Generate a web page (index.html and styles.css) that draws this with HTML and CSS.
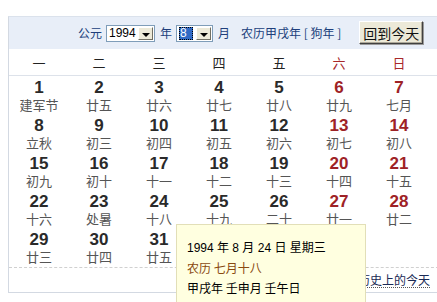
FILE: index.html
```html
<!DOCTYPE html>
<html lang="zh-CN">
<head>
<meta charset="utf-8">
<link rel="stylesheet" href="styles.css">
</head>
<body>
<div class="cal">
  <div class="topbar">
    <span class="lbl">公元</span>
    <div class="sel sel-year"><span class="val">1994</span><span class="arrow"></span></div>
    <span class="lbl">年</span>
    <div class="sel sel-month"><span class="val"><span class="hl">8</span></span><span class="arrow"></span></div>
    <span class="lbl">月</span>
    <span class="lunar-year">农历甲戌年 [ 狗年 ]</span>
    <button class="today-btn">回到今天</button>
  </div>
  <div class="weekdays">
    <div>一</div><div>二</div><div>三</div><div>四</div><div>五</div><div class="we">六</div><div class="we">日</div>
  </div>
  <div class="days">
    <div class="d"><b>1</b><i>建军节</i></div>
    <div class="d"><b>2</b><i>廿五</i></div>
    <div class="d"><b>3</b><i>廿六</i></div>
    <div class="d"><b>4</b><i>廿七</i></div>
    <div class="d"><b>5</b><i>廿八</i></div>
    <div class="d we"><b>6</b><i>廿九</i></div>
    <div class="d we"><b>7</b><i>七月</i></div>
    <div class="d"><b>8</b><i>立秋</i></div>
    <div class="d"><b>9</b><i>初三</i></div>
    <div class="d"><b>10</b><i>初四</i></div>
    <div class="d"><b>11</b><i>初五</i></div>
    <div class="d"><b>12</b><i>初六</i></div>
    <div class="d we"><b>13</b><i>初七</i></div>
    <div class="d we"><b>14</b><i>初八</i></div>
    <div class="d"><b>15</b><i>初九</i></div>
    <div class="d"><b>16</b><i>初十</i></div>
    <div class="d"><b>17</b><i>十一</i></div>
    <div class="d"><b>18</b><i>十二</i></div>
    <div class="d"><b>19</b><i>十三</i></div>
    <div class="d we"><b>20</b><i>十四</i></div>
    <div class="d we"><b>21</b><i>十五</i></div>
    <div class="d"><b>22</b><i>十六</i></div>
    <div class="d"><b>23</b><i>处暑</i></div>
    <div class="d"><b>24</b><i>十八</i></div>
    <div class="d"><b>25</b><i>十九</i></div>
    <div class="d"><b>26</b><i>二十</i></div>
    <div class="d we"><b>27</b><i>廿一</i></div>
    <div class="d we"><b>28</b><i>廿二</i></div>
    <div class="d"><b>29</b><i>廿三</i></div>
    <div class="d"><b>30</b><i>廿四</i></div>
    <div class="d"><b>31</b><i>廿五</i></div>
  </div>
  <div class="footer"><span class="hist">历史上的今天</span></div>
</div>
<div class="tip">
  <div class="t1">1994 年 8 月 24 日 星期三</div>
  <div class="t2">农历 七月十八</div>
  <div class="t3">甲戌年 壬申月 壬午日</div>
</div>
</body>
</html>
```
FILE: styles.css
```css
html, body { margin: 0; padding: 0; background: #fff; }
body {
  font-family: "Noto Sans CJK SC", "Liberation Sans", sans-serif;
  font-size: 12px;
  color: #222;
  overflow: hidden;
  width: 437px;
  height: 302px;
  position: relative;
}
.cal {
  margin: 16px 0 0 8px;
  width: 440px;
  border: 1px solid #d3d9e2;
  border-top-color: #dbe2ec;
}
.topbar {
  height: 32px;
  background: #e8eef8;
  display: flex;
  align-items: center;
  padding-left: 69px;
}
.lbl, .lunar-year {
  color: #203f7c;
  font-size: 12px;
  line-height: 16px;
}
.lbl { margin-right: 4px; }
.sel {
  box-sizing: border-box;
  height: 17px;
  border: 1px solid #7f9db9;
  background: #fff;
  display: flex;
  align-items: stretch;
  margin-right: 5px;
}
.sel-year { width: 49px; }
.sel-month { width: 37px; }
.val {
  flex: 1;
  font-family: "Liberation Sans", sans-serif;
  font-size: 12px;
  line-height: 15px;
  padding-left: 2px;
  color: #000;
}
.hl {
  display: inline-block;
  background: #316ac5;
  color: #fff;
  width: 14px;
  height: 13px;
  line-height: 13px;
  margin-top: 1px;
  outline: 1px dotted #000;
  outline-offset: -1px;
  text-indent: 1px;
}
.arrow {
  width: 13px;
  margin: 1px;
  background: #ece9d8;
  border: 1px solid;
  border-color: #fff #716f64 #716f64 #fff;
  position: relative;
}
.arrow::after {
  content: "";
  position: absolute;
  left: 3px;
  top: 5px;
  border-left: 4px solid transparent;
  border-right: 4px solid transparent;
  border-top: 4px solid #000;
}
.lunar-year { margin-left: 7px; margin-right: 18px; }
.today-btn {
  box-sizing: border-box;
  width: 64px;
  height: 23px;
  margin-top: -1px;
  padding: 0;
  font-family: "Noto Sans CJK SC", sans-serif;
  font-size: 14px;
  line-height: 18px;
  color: #111;
  background: #ece9d8;
  border: 1px solid;
  border-color: #fff #404040 #404040 #fff;
  box-shadow: inset -1px -1px 0 #aca899, 1px 1px 0 #9a9a9a;
}
.weekdays {
  display: grid;
  grid-template-columns: repeat(7, 60px);
  height: 26px;
  border-bottom: 1px solid #dde2ea;
  align-items: center;
  text-align: center;
  font-size: 13px;
  color: #222;
}
.weekdays .we { color: #a8282a; }
.days {
  display: grid;
  grid-template-columns: repeat(7, 60px);
  grid-auto-rows: 38px;
  padding-top: 2px;
  box-sizing: border-box;
  height: 191px;
}
.d {
  text-align: center;
  padding-top: 1px;
}
.d b {
  display: block;
  font-family: "Liberation Sans", sans-serif;
  font-weight: bold;
  font-size: 17px;
  line-height: 18px;
  color: #2a2a2a;
}
.d i {
  display: block;
  font-style: normal;
  font-size: 13px;
  line-height: 16px;
  color: #555;
}
.d.we b { color: #9e2226; }
.footer {
  border-top: 1px dashed #d0d0d0;
  height: 24px;
  display: flex;
  align-items: center;
  padding-left: 349px;
}
.hist {
  font-size: 12px;
  line-height: 14px;
  color: #1a2a55;
  border-bottom: 1px dotted #555;
}
.tip {
  position: absolute;
  left: 176px;
  top: 224px;
  width: 190px;
  height: 78px;
  box-sizing: border-box;
  background: #ffffe0;
  border: 1px solid #e2dfb8;
  border-bottom: 0;
  padding: 13px 0 0 10px;
  font-size: 12px;
  line-height: 20px;
  color: #000;
}
.t1 { font-family: "Liberation Sans", "Noto Sans CJK SC", sans-serif; }
.t2 { color: #8a4a10; }
```
